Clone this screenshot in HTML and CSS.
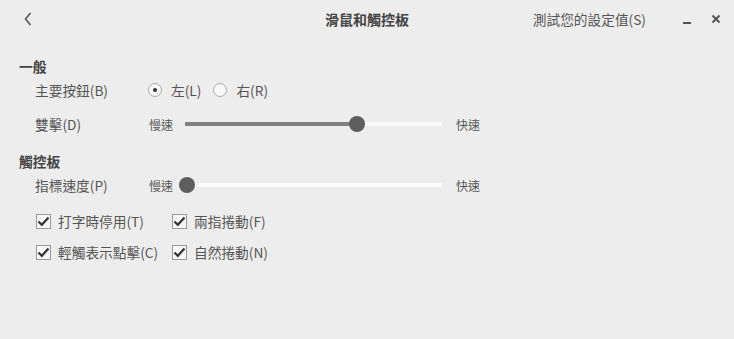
FILE: index.html
```html
<!DOCTYPE html>
<html lang="zh-Hant">
<head>
  <meta charset="UTF-8">
  <title>滑鼠和觸控板</title>
  <link rel="stylesheet" href="styles.css">
</head>
<body>
  <div class="window">
    <div class="header">
      <div class="header-left">
        <svg class="back" width="8" height="14" viewBox="0 0 8 14"><path d="M6.5 1 L1.5 7 L6.5 13" fill="none" stroke="#555" stroke-width="1.6"/></svg>
      </div>
      <div class="title">滑鼠和觸控板</div>
      <div class="header-right">
        <span class="test-btn">測試您的設定值(S)</span>
        <svg class="win-btn" width="12" height="12" viewBox="0 0 12 12"><rect x="2" y="9" width="8" height="2" fill="#555"/></svg>
        <svg class="win-btn" width="12" height="12" viewBox="0 0 12 12"><path d="M2.5 2.5 L9.5 9.5 M9.5 2.5 L2.5 9.5" stroke="#555" stroke-width="2"/></svg>
      </div>
    </div>

    <div class="content">
      <div class="section-title">一般</div>
      <div class="row row-radio">
        <div class="label">主要按鈕(B)</div>
        <div class="radios">
          <span class="radio checked"></span><span class="radio-label">左(L)</span>
          <span class="radio"></span><span class="radio-label">右(R)</span>
        </div>
      </div>
      <div class="row row-slider">
        <div class="label">雙擊(D)</div>
        <div class="slider">
          <span class="slider-end">慢速</span>
          <div class="track">
            <div class="fill" style="width: 171px"></div>
            <div class="thumb" style="left: 171px"></div>
          </div>
          <span class="slider-end">快速</span>
        </div>
      </div>

      <div class="section-title section-2">觸控板</div>
      <div class="row">
        <div class="label">指標速度(P)</div>
        <div class="slider">
          <span class="slider-end">慢速</span>
          <div class="track">
            <div class="fill" style="width: 1px"></div>
            <div class="thumb" style="left: 1px"></div>
          </div>
          <span class="slider-end">快速</span>
        </div>
      </div>

      <div class="checks">
        <label class="check"><span class="box"><svg width="13" height="11" viewBox="0 0 13 11"><path d="M1.5 5.5 L4.8 8.8 L11.5 1.5" fill="none" stroke="#333" stroke-width="2.2"/></svg></span>打字時停用(T)</label>
        <label class="check"><span class="box"><svg width="13" height="11" viewBox="0 0 13 11"><path d="M1.5 5.5 L4.8 8.8 L11.5 1.5" fill="none" stroke="#333" stroke-width="2.2"/></svg></span>兩指捲動(F)</label>
        <label class="check"><span class="box"><svg width="13" height="11" viewBox="0 0 13 11"><path d="M1.5 5.5 L4.8 8.8 L11.5 1.5" fill="none" stroke="#333" stroke-width="2.2"/></svg></span>輕觸表示點擊(C)</label>
        <label class="check"><span class="box"><svg width="13" height="11" viewBox="0 0 13 11"><path d="M1.5 5.5 L4.8 8.8 L11.5 1.5" fill="none" stroke="#333" stroke-width="2.2"/></svg></span>自然捲動(N)</label>
      </div>
    </div>
  </div>
</body>
</html>
```

FILE: styles.css
```css
body {
  margin: 0;
  background-color: #ededed;
  font-family: "Noto Sans CJK TC", "Noto Sans", sans-serif;
  font-size: 13.7px;
  color: #555;
}

.window {
  width: 734px;
  height: 339px;
}

.header {
  height: 38px;
  display: grid;
  grid-template-columns: 1fr auto 1fr;
  align-items: center;
}

.header-left {
  padding-left: 24px;
  display: flex;
  align-items: center;
}

.title {
  font-size: 14px;
  font-weight: bold;
  color: #444;
}

.header-right {
  display: flex;
  align-items: center;
  justify-content: flex-end;
  padding-right: 12px;
}

.test-btn {
  margin-right: 18px;
}

.win-btn {
  margin-left: 17px;
}

.content {
  padding-left: 19px;
}

.section-title {
  margin-top: 18px;
  height: 20px;
  line-height: 20px;
  font-weight: bold;
  color: #444;
}

.section-2 {
  margin-top: 7px;
}

.row {
  display: flex;
  align-items: center;
  height: 28px;
  padding-left: 16px;
}

.row-slider {
  height: 40px;
}

.label {
  width: 114px;
}

.radios {
  display: flex;
  align-items: center;
}

.radio {
  width: 12px;
  height: 12px;
  margin-left: -1px;
  border: 1px solid #aaa;
  border-radius: 50%;
  background: #f7f7f7;
  display: flex;
  align-items: center;
  justify-content: center;
}

.radio.checked::after {
  content: "";
  width: 4px;
  height: 4px;
  border-radius: 50%;
  background: #333;
}

.radio-label {
  margin-left: 9px;
  margin-right: 13px;
}

.slider {
  display: flex;
  align-items: center;
}

.slider-end {
  font-size: 12px;
}

.track {
  position: relative;
  width: 257px;
  height: 4px;
  margin: 0 14px 0 12px;
  background: #fafafa;
}

.fill {
  height: 4px;
  background: #808080;
}

.thumb {
  position: absolute;
  top: -6px;
  width: 16px;
  height: 16px;
  margin-left: -7px;
  border-radius: 50%;
  background: #5e5e5e;
}

.checks {
  display: grid;
  grid-template-columns: 136px auto;
  row-gap: 3px;
  padding-left: 17px;
  margin-top: 8px;
}

.check {
  display: flex;
  align-items: center;
  height: 28px;
}

.box {
  width: 13px;
  height: 13px;
  border: 1px solid #999;
  background: #f7f7f7;
  display: flex;
  align-items: center;
  justify-content: center;
  margin-right: 7px;
}
```
